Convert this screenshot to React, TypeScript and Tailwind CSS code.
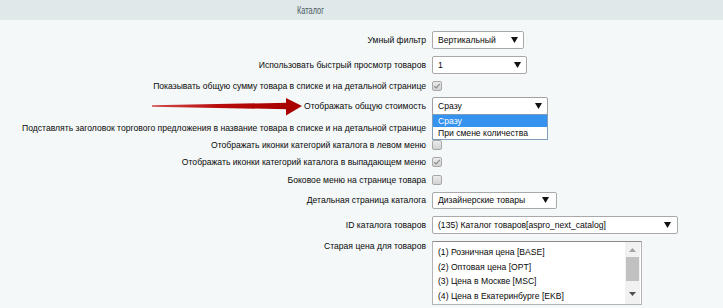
import React from "react";

function Tri() {
  return (
    <svg width="7" height="6" viewBox="0 0 7 6" className="shrink-0">
      <polygon points="0,0 7,0 3.5,6" fill="#111" />
    </svg>
  );
}

function Check({ checked }: { checked?: boolean }) {
  return (
    <div className="w-[10px] h-[10px] border border-[#a8a8a8] rounded-[2px] bg-gradient-to-b from-[#ececec] to-[#d2d2d2] flex items-center justify-center">
      {checked && (
        <svg width="8" height="8" viewBox="0 0 8 8">
          <polyline points="1.2,4.2 3.2,6 6.8,1.8" fill="none" stroke="#8c8c8c" strokeWidth="1.2" />
        </svg>
      )}
    </div>
  );
}

function Row({ h, label, children }: { h: string; label: string; children?: React.ReactNode }) {
  return (
    <div className={`flex items-center ${h}`}>
      <div className="w-[426px] text-right whitespace-nowrap leading-[10px]">{label}</div>
      <div className="ml-[6px] relative flex items-center">{children}</div>
    </div>
  );
}

export default function App() {
  return (
    <div className="w-[723px] h-[308px] bg-[#f4f8f8] relative overflow-hidden text-[8.6px] text-[#0a0a0a] font-['Liberation_Sans',Arial,sans-serif]">
      <div className="h-[20px] bg-[#e0e8ea] flex items-center pl-[297px]">
        <span className="inline-block origin-left scale-x-[0.74] text-[10px] text-[#4a5b60]">Каталог</span>
      </div>
      <div className="pt-[8px]">
        <Row h="h-[24px]" label="Умный фильтр">
          <div className="w-[92px] h-[18px] bg-white border border-[#a9a9a9] rounded-[2px] flex items-center justify-between pl-[5px] pr-[5px]">
            <span>Вертикальный</span>
            <Tri />
          </div>
        </Row>
        <Row h="h-[26px]" label="Использовать быстрый просмотр товаров">
          <div className="w-[95px] h-[18px] bg-white border border-[#a9a9a9] rounded-[2px] flex items-center justify-between pl-[5px] pr-[5px]">
            <span>1</span>
            <Tri />
          </div>
        </Row>
        <Row h="h-[16px]" label="Показывать общую сумму товара в списке и на детальной странице">
          <Check checked />
        </Row>
        <Row h="h-[24px]" label="Отображать общую стоимость">
          <div className="w-[116px] h-[18px] bg-white border border-[#a0a0a0] rounded-[2px] flex items-center justify-between pl-[5px] pr-[5px]">
            <span>Сразу</span>
            <Tri />
          </div>
          <div className="absolute left-0 top-[17px] w-[116px] bg-white border border-[#7f9db9] z-10">
            <div className="h-[12px] leading-[12px] pl-[5px] bg-[#3592ee] text-white">Сразу</div>
            <div className="h-[12px] leading-[12px] pl-[5px]">При смене количества</div>
          </div>
        </Row>
        <Row h="h-[20px]" label="Подставлять заголовок торгового предложения в название товара в списке и на детальной странице">
          <Check />
        </Row>
        <Row h="h-[14px]" label="Отображать иконки категорий каталога в левом меню">
          <Check />
        </Row>
        <Row h="h-[20px]" label="Отображать иконки категорий каталога в выпадающем меню">
          <Check checked />
        </Row>
        <Row h="h-[16px]" label="Боковое меню на странице товара">
          <Check />
        </Row>
        <Row h="h-[24px]" label="Детальная страница каталога">
          <div className="w-[125px] h-[17px] bg-white border border-[#a9a9a9] rounded-[2px] flex items-center justify-between pl-[5px] pr-[7px]">
            <span>Дизайнерские товары</span>
            <Tri />
          </div>
        </Row>
        <Row h="h-[26px]" label="ID каталога товаров">
          <div className="w-[246px] h-[18px] bg-white border border-[#a9a9a9] rounded-[2px] flex items-center justify-between pl-[5px] pr-[6px]">
            <span>(135) Каталог товаров[aspro_next_catalog]</span>
            <Tri />
          </div>
        </Row>
        <div className="flex items-start mt-[3px]">
          <div className="w-[426px] text-right whitespace-nowrap leading-[10px]">Старая цена для товаров</div>
          <div className="ml-[6px] w-[210px] h-[64px] bg-white border border-[#b3b3b3] border-t-[#8a8a8a] rounded-[1px] flex">
            <div className="flex-1 pl-[5px] pt-[3px] leading-[14.5px] whitespace-nowrap">
              <div>(1) Розничная цена [BASE]</div>
              <div>(2) Оптовая цена [OPT]</div>
              <div>(3) Цена в Москве [MSC]</div>
              <div>(4) Цена в Екатеринбурге [EKB]</div>
            </div>
            <div className="w-[15px] bg-[#f1f1f1] flex flex-col items-center mr-[1px]">
              <svg width="7" height="4" viewBox="0 0 7 4" className="mt-[6px]">
                <polygon points="0,4 7,4 3.5,0" fill="#a3a3a3" />
              </svg>
              <div className="w-[13px] h-[24px] bg-[#c1c1c1] mt-[5px]" />
              <svg width="7" height="4" viewBox="0 0 7 4" className="mt-auto mb-[8px]">
                <polygon points="0,0 7,0 3.5,4" fill="#505050" />
              </svg>
            </div>
          </div>
        </div>
      </div>
      <svg className="absolute left-0 top-0 pointer-events-none" width="723" height="308">
        <defs>
          <linearGradient id="ag" x1="0" y1="0" x2="1" y2="0">
            <stop offset="0" stopColor="#d24a4a" />
            <stop offset="0.5" stopColor="#b80c0c" />
            <stop offset="1" stopColor="#a80000" />
          </linearGradient>
        </defs>
        <polygon points="152,105.2 288,102.8 288,109.2 152,106.8" fill="url(#ag)" />
        <polygon points="286,98 302,106 286,115.5" fill="#aa0000" />
      </svg>
    </div>
  );
}
